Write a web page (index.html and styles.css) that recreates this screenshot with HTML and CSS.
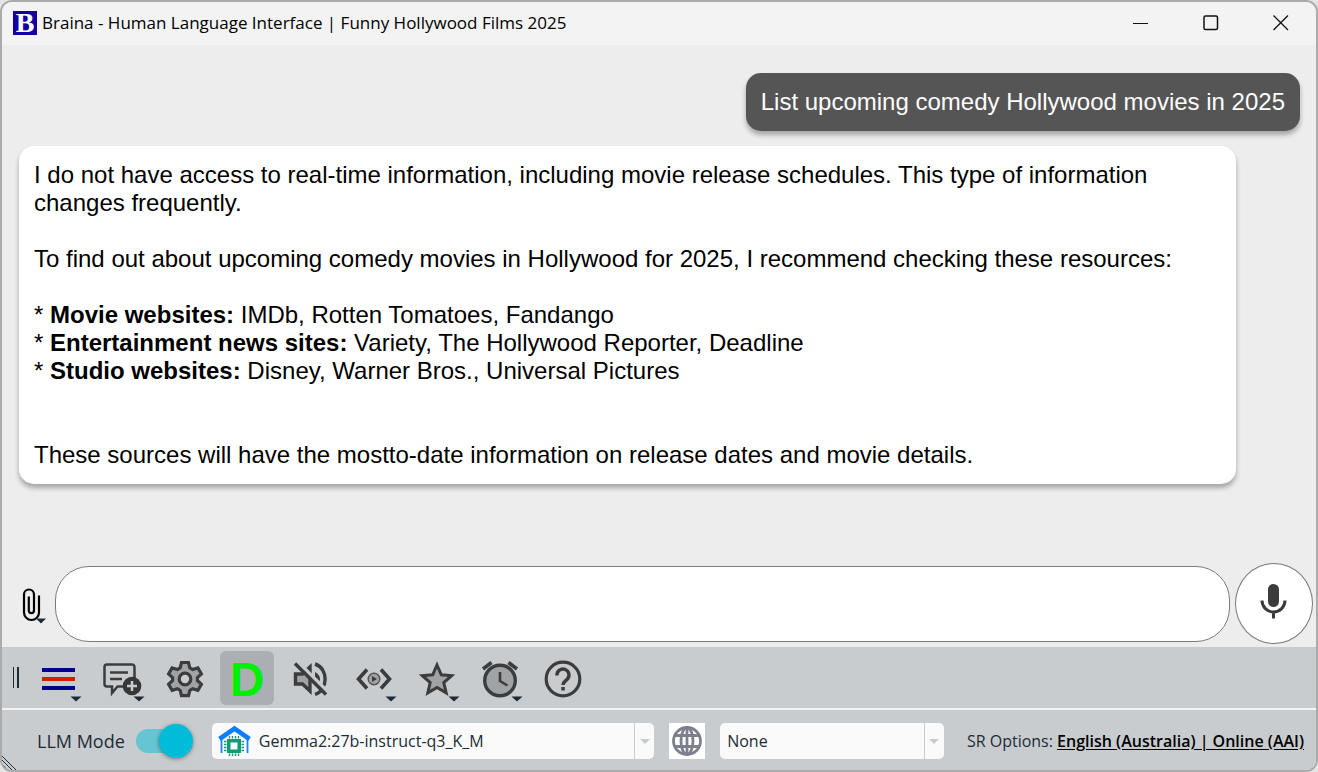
FILE: index.html
```
<!DOCTYPE html>
<html lang="en">
<head>
<meta charset="utf-8">
<meta name="viewport" content="width=device-width, initial-scale=1">
<title>Braina - Human Language Interface</title>
<link rel="stylesheet" href="styles.css">
</head>
<body>
<div class="window">
  <header class="titlebar">
    <span class="app-icon" aria-hidden="true">B</span>
    <h1 class="title">Braina - Human Language Interface | Funny Hollywood Films 2025</h1>
    <div class="window-controls">
      <button class="window-button" aria-label="Minimize"><svg viewBox="0 0 16 16"><path d="M0 8.5h15" stroke="#111" fill="none"/></svg></button>
      <button class="window-button" aria-label="Maximize"><svg viewBox="0 0 16 16"><rect x="1" y="1" width="13.5" height="13.5" rx="1.5" stroke="#111" stroke-width="1.5" fill="none"/></svg></button>
      <button class="window-button" aria-label="Close"><svg viewBox="0 0 16 16"><path d="M.5.5l14.500 14.500M15 .5L.5 15" stroke="#111" stroke-width="1.3" fill="none"/></svg></button>
    </div>
  </header>

  <main class="chat">
    <div class="message message-user">List upcoming comedy Hollywood movies in 2025</div>
    <div class="message message-reply">
      <p>I do not have access to real-time information, including movie release schedules. This type of information changes frequently.</p>
      <p>To find out about upcoming comedy movies in Hollywood for 2025, I recommend checking these resources:</p>
      <p>* <b>Movie websites:</b> IMDb, Rotten Tomatoes, Fandango<br>* <b>Entertainment news sites:</b> Variety, The Hollywood Reporter, Deadline<br>* <b>Studio websites:</b> Disney, Warner Bros., Universal Pictures</p>
      <p class="closing">These sources will have the mostto-date information on release dates and movie details.</p>
    </div>
  </main>

  <form class="composer">
    <button type="button" class="attach" aria-label="Attach file">
      <svg viewBox="0 -1 26 38"><path d="M17 9v17a7.500 7.500 0 0 1-15 0V8a5 5 0 0 1 10 0v16a2.600 2.600 0 0 1-5.200 0V10" transform="translate(0 .5)" fill="none" stroke="#000" stroke-width="2.200"/><path d="M14 32.500h10l-5 5z" fill="#1d2b36"/></svg>
    </button>
    <input class="prompt" type="text" aria-label="Message">
    <button type="button" class="mic" aria-label="Speak">
      <svg viewBox="0 2 28 38"><rect x="8" y="1" width="11" height="23" rx="5.500" fill="#3b3b3b"/><path d="M2 17.500a11.500 11.500 0 0 0 23 0M13.500 29v6.500" fill="none" stroke="#3b3b3b" stroke-width="3"/></svg>
    </button>
  </form>

  <nav class="toolbar" aria-label="Tools">
    <span class="handle"></span>
    <div class="tools">
    <button class="tool" aria-label="Menu"><svg viewBox="0 0 54 54"><path d="M11 19h33M11 37h33" stroke="#00008c" stroke-width="4"/><path d="M11 28h33" stroke="#cf2000" stroke-width="4"/><path class="drop" d="M39.500 45.500h11l-5.500 5z"/></svg></button>
    <button class="tool" aria-label="New chat"><svg viewBox="0 0 54 54"><path class="line" d="M30 35.500h-6.500L18 42v-6.500h-5a2.500 2.500 0 0 1-2.500-2.500V16a2.500 2.500 0 0 1 2.500-2.500h25a2.500 2.500 0 0 1 2.500 2.500v12" stroke-width="2.500"/><path class="line" d="M16 21.500h18M16 28h12" stroke-width="2.500"/><circle cx="38" cy="35" r="9.300" fill="#363636"/><path d="M38 30v10M33 35h10" stroke="#c8cccf" stroke-width="2.500"/><path class="drop" d="M39.500 45.500h11l-5.500 5z"/></svg></button>
    <button class="tool" aria-label="Settings"><svg viewBox="0 0 54 54"><path d="M24.500 11.500h7l1.300 5.300 2.800 1.700 5.300-1.600 3.500 6-4 3.800v2.800l4 3.800-3.500 6-5.300-1.600-2.800 1.700-1.300 5.300h-7l-1.300-5.300-2.800-1.700-5.300 1.600-3.500-6 4-3.800v-2.800l-4-3.800 3.500-6 5.300 1.600 2.800-1.700z" fill="#a0a3a6" stroke="#3c3c3c" stroke-width="3.200"/><circle cx="28" cy="28" r="5.800" fill="#c8cccf" stroke="#3c3c3c" stroke-width="3.200"/></svg></button>
    <button class="tool tool-active" aria-label="Dictation">D</button>
    <button class="tool" aria-label="Unmute"><svg viewBox="0 0 54 54"><path d="M12.500 23h7l7.500-7v24l-7.500-7h-7z" fill="#a0a3a6" stroke="#3c3c3c" stroke-width="3.400"/><path d="M32 13c13.500 4 13.500 26 0 30.500" class="line" stroke-width="3.400"/><path d="M32 21q5 3 5 7t-5 7z" fill="#3c3c3c"/><path d="M14.500 10.500l31 31" stroke="#c8cccf" stroke-width="3.500"/><path d="M12 12.500l31 31" stroke="#3c3c3c" stroke-width="3.400"/></svg></button>
    <button class="tool" aria-label="Custom commands"><svg viewBox="0 0 54 54"><path class="line" d="M21 18.500L12.500 28l8.500 9.500M35 18.500l8.500 9.500-8.500 9.500" stroke-width="3.600"/><circle cx="28" cy="28" r="5.800" fill="#a0a3a6" stroke="#555" stroke-width="1.400"/><path d="M26 25l5 3-5 3z" fill="#3c3c3c"/><path class="drop" d="M39.500 45.500h11l-5.500 5z"/></svg></button>
    <button class="tool" aria-label="Favorites"><svg viewBox="0 0 54 54"><path d="M28 14l4.300 9.800 10.400.9-7.900 6.900 2.400 10.300L28 36.500l-9.200 5.400 2.400-10.300-7.900-6.900 10.400-.9z" fill="#a0a3a6" stroke="#3c3c3c" stroke-width="3"/><path class="drop" d="M39.500 45.500h11l-5.500 5z"/></svg></button>
    <button class="tool" aria-label="Alarms"><svg viewBox="0 0 54 54"><circle cx="28" cy="29.500" r="15.300" fill="#a0a3a6" stroke="#3c3c3c" stroke-width="3.400"/><path class="line" d="M28 21v9l7.500 4.500" stroke-width="2.600"/><path class="line" d="M11 18l8.500-6.500M45 18l-8.500-6.500" stroke-width="3.600"/><path class="drop" d="M39.500 45.500h11l-5.500 5z"/></svg></button>
    <button class="tool" aria-label="Help"><svg viewBox="0 0 54 54"><circle class="line" cx="28" cy="28" r="16.800" stroke-width="3.200"/><path class="line" d="M22 24.500a6 6 0 1 1 10 4c-2 2-4 2.500-4 5.500" stroke-width="3.400"/><path d="M26.300 36h3.500v3.500h-3.500z" fill="#3c3c3c"/></svg></button>
    </div>
  </nav>

  <footer class="statusbar">
    <label class="mode">LLM Mode <input class="switch" type="checkbox" role="switch" checked></label>
    <div class="combo combo-model">
      <svg class="model-icon" viewBox="0 0 34 32"><path d="M3.500 13v15M29.500 13v15" stroke="#1684ff" stroke-width="1.800"/><path d="M1.500 14L16.500 3.500 31.500 14" fill="none" stroke="#0d7dff" stroke-width="4.600"/><path d="M11.500 11v20M14.500 11v20M17.500 11v20M20.500 11v20M6 16.500h20M6 19.500h20M6 22.500h20M6 25.500h20" stroke="#129a78" stroke-width="1.400"/><rect x="8.500" y="13.500" width="15" height="15" fill="#fafafa"/><rect x="9" y="14" width="14" height="14" fill="#129a78"/><rect x="12.500" y="17.500" width="7" height="7" fill="#fafafa"/></svg>
      <select class="select" aria-label="Language model"><option>Gemma2:27b-instruct-q3_K_M</option></select>
      <span class="combo-arrow"></span>
    </div>
    <button class="web" aria-label="Web search"><svg viewBox="0 0 36 36"><g fill="none" stroke="#7c808c" stroke-width="2.800"><circle cx="18" cy="18" r="13.500"/><ellipse cx="18" cy="18" rx="6" ry="13.500"/><path d="M18 4.500v27M6 12.500h24M6 23.500h24"/></g></svg></button>
    <div class="combo combo-option">
      <select class="select" aria-label="Prompt template"><option>None</option></select>
      <span class="combo-arrow"></span>
    </div>
    <div class="speech">SR Options: <a href="#speech">English (Australia) | Online (AAI)</a></div>
  </footer>
  <svg class="grip" viewBox="0 0 14 14" aria-hidden="true"><path d="M0 0l14 14M0 4l10 10M0 8l6 6" stroke="#1d2b36" fill="none"/></svg>
</div>
</body>
</html>
```
FILE: styles.css
```
* {
  box-sizing: border-box;
}

body {
  margin: 0;
  background: #e4e4e4;
  color: #000;
  font-family: "Open Sans", sans-serif;
}

button {
  padding: 0;
  border: 0;
  background: none;
  font: inherit;
}

svg {
  display: block;
}

.window {
  position: relative;
  display: flex;
  flex-direction: column;
  min-height: 100vh;
  border: 2px solid #ababab;
  border-radius: 12px;
  background: #ededed;
  overflow: hidden;
}

.titlebar {
  display: flex;
  align-items: center;
  gap: 5px;
  height: 43px;
  padding: 0 0 2px 11px;
  background: #f3f3f3;
}

.app-icon {
  width: 24px;
  height: 24px;
  background: #1200a0;
  color: #fff;
  font: bold 28px/24px "Liberation Serif", serif;
  text-align: center;
}

.title {
  flex: 1;
  margin: 0;
  font-size: 17px;
  font-weight: 400;
  white-space: nowrap;
}

.window-controls {
  display: flex;
}

.window-button {
  display: grid;
  place-items: center;
  width: 70px;
  height: 40px;
}

.window-button svg {
  width: 16px;
  height: 16px;
}

.chat {
  flex: 1;
  display: flex;
  flex-direction: column;
  align-items: flex-start;
  gap: 15px;
  padding: 28px 16px 24px 17px;
}

.message {
  padding: 15px;
  border-radius: 15px;
  box-shadow: 0 4px 5px rgba(0, 0, 0, 0.3);
  font: 24px/28px "Liberation Sans", Arial, sans-serif;
}

.message-user {
  align-self: flex-end;
  background: #555;
  color: #fff;
}

.message-reply {
  width: 95%;
  background: #fff;
}

.message-reply p {
  margin: 0 0 28px;
}

.message-reply .closing {
  margin: 56px 0 0;
}

.composer {
  display: flex;
  align-items: center;
  gap: 5px;
  padding: 0 3px 3px 20px;
}

.attach {
  width: 28px;
}

.attach svg {
  width: 26px;
  height: 38px;
  overflow: visible;
}

.prompt {
  flex: 1;
  min-width: 0;
  height: 76px;
  padding: 0 24px;
  border: 1px solid #7a7a7a;
  border-radius: 34px;
  background: #fff;
  font: 24px "Liberation Sans", Arial, sans-serif;
}

.mic {
  display: grid;
  place-items: center;
  width: 78px;
  height: 81px;
  border: 1px solid #7a7a7a;
  border-radius: 50%;
  background: #fff;
}

.mic svg {
  width: 28px;
  height: 38px;
  overflow: visible;
}

.toolbar {
  display: flex;
  align-items: center;
  gap: 12px;
  height: 63px;
  padding-left: 11px;
  border-bottom: 2px solid #f4f4f4;
  background: #c8cccf;
}

.handle {
  width: 6px;
  height: 21px;
  border: solid #1d2b36;
  border-width: 0 2px 0 1px;
}

.tools {
  display: flex;
  gap: 9px;
}

.tool {
  width: 54px;
  height: 54px;
  border-radius: 6px;
}

.tool svg {
  width: 54px;
  height: 54px;
}

.tool-active {
  padding-top: 3px;
  background: #abafb3;
  color: #00f000;
  font: bold 48px/51px "Liberation Sans", Arial, sans-serif;
}

.line {
  fill: none;
  stroke: #3c3c3c;
}

.drop {
  fill: #1d2b36;
}

.statusbar {
  display: flex;
  align-items: center;
  gap: 15px;
  height: 60px;
  padding: 2px 12px 0 35px;
  background: #c8cccf;
  color: #1d2b36;
  white-space: nowrap;
}

.mode {
  display: flex;
  align-items: center;
  gap: 11px;
  font-size: 18px;
}

.switch {
  position: relative;
  appearance: none;
  width: 61px;
  height: 24px;
  margin: 0;
  border-radius: 12px;
  background: linear-gradient(90deg, #66c5d2 45px, transparent 45px);
}

.switch::after {
  content: "";
  position: absolute;
  top: -5px;
  left: 23px;
  width: 34px;
  height: 34px;
  border-radius: 50%;
  background: #00bcd8;
  box-shadow: 0 1px 4px rgba(0, 0, 0, 0.4);
}

.combo {
  display: flex;
  align-items: center;
  height: 36px;
  border-radius: 5px;
  background: #fafafa;
}

.combo-model {
  flex: 441 1 0;
}

.combo-option {
  flex: 223 1 0;
}

.model-icon {
  width: 34px;
  height: 32px;
  margin-left: 6px;
}

.select {
  appearance: none;
  flex: 1;
  min-width: 0;
  height: 36px;
  padding: 0 7px;
  border: 0;
  background: none;
  color: #1d2b36;
  font: 16px "Open Sans", sans-serif;
}

.combo-arrow {
  display: grid;
  place-items: center;
  width: 20px;
  height: 36px;
  border-left: 1px solid #c8cccf;
}

.combo-arrow::after {
  content: "";
  border: 5px solid transparent;
  border-top-color: #c8cccf;
  border-bottom: 0;
}

.web {
  width: 36px;
  height: 36px;
  background: #fff;
}

.speech {
  margin-left: 8px;
  font-size: 16px;
}

.speech a {
  color: #000;
  font-weight: 600;
  text-underline-offset: 2px;
}

.grip {
  position: absolute;
  bottom: 0;
  left: 0;
  width: 14px;
  height: 14px;
}
```
